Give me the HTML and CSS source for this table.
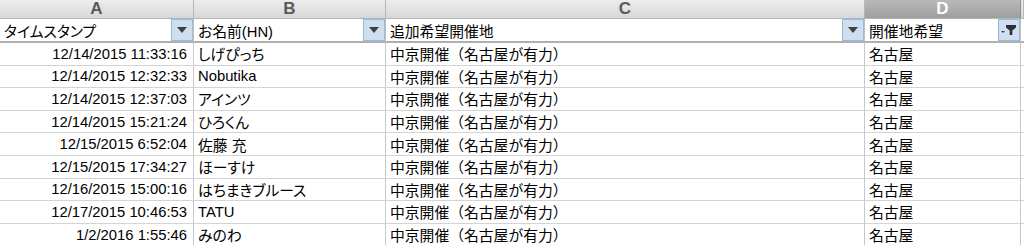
FILE: index.html
```html
<!DOCTYPE html>
<html lang="ja">
<head>
<meta charset="utf-8">
<link rel="stylesheet" href="styles.css">
</head>
<body>
<div class="sheet">
  <div class="row colhead">
    <div class="cell">A</div>
    <div class="cell">B</div>
    <div class="cell">C</div>
    <div class="cell sel">D</div>
    <div class="cell edge"></div>
  </div>
  <div class="row filter">
    <div class="cell"><span class="label kana">タイムスタンプ</span><span class="fbtn"><svg width="10" height="6" viewBox="0 0 10 6"><path d="M0 0H10L5 6Z" fill="#404040"/></svg></span></div>
    <div class="cell"><span class="label kana">お名前(HN)</span><span class="fbtn"><svg width="10" height="6" viewBox="0 0 10 6"><path d="M0 0H10L5 6Z" fill="#404040"/></svg></span></div>
    <div class="cell"><span class="label">追加希望開催地</span><span class="fbtn"><svg width="10" height="6" viewBox="0 0 10 6"><path d="M0 0H10L5 6Z" fill="#404040"/></svg></span></div>
    <div class="cell"><span class="label">開催地希望</span><span class="fbtn funnel"><svg width="16" height="12" viewBox="0 0 16 12"><path d="M0 7H4L2 9Z" fill="#404040"/><path d="M5 1H15V3.5L11.3 6.5V11H8.7V6.5L5 3.5Z" fill="#303030"/></svg></span></div>
    <div class="cell edge"></div>
  </div>
  <div class="row data"><div class="cell num">12/14/2015 11:33:16</div><div class="cell kana">しげぴっち</div><div class="cell">中京開催（名古屋が有力）</div><div class="cell">名古屋</div><div class="cell edge"></div></div>
  <div class="row data"><div class="cell num">12/14/2015 12:32:33</div><div class="cell kana">Nobutika</div><div class="cell">中京開催（名古屋が有力）</div><div class="cell">名古屋</div><div class="cell edge"></div></div>
  <div class="row data"><div class="cell num">12/14/2015 12:37:03</div><div class="cell kana">アインツ</div><div class="cell">中京開催（名古屋が有力）</div><div class="cell">名古屋</div><div class="cell edge"></div></div>
  <div class="row data"><div class="cell num">12/14/2015 15:21:24</div><div class="cell kana">ひろくん</div><div class="cell">中京開催（名古屋が有力）</div><div class="cell">名古屋</div><div class="cell edge"></div></div>
  <div class="row data"><div class="cell num">12/15/2015 6:52:04</div><div class="cell kana">佐藤 充</div><div class="cell">中京開催（名古屋が有力）</div><div class="cell">名古屋</div><div class="cell edge"></div></div>
  <div class="row data"><div class="cell num">12/15/2015 17:34:27</div><div class="cell kana">ほーすけ</div><div class="cell">中京開催（名古屋が有力）</div><div class="cell">名古屋</div><div class="cell edge"></div></div>
  <div class="row data"><div class="cell num">12/16/2015 15:00:16</div><div class="cell kana">はちまきブルース</div><div class="cell">中京開催（名古屋が有力）</div><div class="cell">名古屋</div><div class="cell edge"></div></div>
  <div class="row data"><div class="cell num">12/17/2015 10:46:53</div><div class="cell kana">TATU</div><div class="cell">中京開催（名古屋が有力）</div><div class="cell">名古屋</div><div class="cell edge"></div></div>
  <div class="row data"><div class="cell num">1/2/2016 1:55:46</div><div class="cell kana">みのわ</div><div class="cell">中京開催（名古屋が有力）</div><div class="cell">名古屋</div><div class="cell edge"></div></div>
</div>
</body>
</html>
```
FILE: styles.css
```css
html, body {
  margin: 0;
  padding: 0;
  background: #ffffff;
}
body {
  width: 1024px;
  height: 245px;
  overflow: hidden;
  font-family: "Liberation Sans", "Noto Sans CJK JP", sans-serif;
  font-size: 14.8px;
  color: #000;
}
.sheet {
  display: flex;
  flex-direction: column;
}
.row {
  display: grid;
  grid-template-columns: 194px 192px 479px 156px 3px;
}
.cell {
  box-sizing: border-box;
  border-right: 1px solid #c8c8c8;
  border-bottom: 1px solid #d4d4d4;
  white-space: nowrap;
  overflow: hidden;
  display: flex;
  align-items: center;
  padding-left: 4px;
}
.kana {
  font-feature-settings: "palt" 1;
}
.cell.edge {
  border-right: none;
  padding: 0;
}
.colhead .cell {
  height: 19px;
  justify-content: center;
  padding: 0;
  background: linear-gradient(#ededed, #d8d8d8);
  border-right: 1px solid #b8b8b8;
  border-bottom: 1px solid #b4b4b4;
  font-weight: bold;
  font-size: 17px;
  color: #5a5a5a;
}
.colhead .cell.sel {
  background: linear-gradient(#b9b9b9, #9e9e9e);
  color: #ffffff;
  border-right-color: #8c8c8c;
}
.colhead .cell.edge {
  background: linear-gradient(#ededed, #d8d8d8);
}
.filter .cell {
  height: 24px;
  padding-right: 0;
  justify-content: space-between;
  border-bottom: 2px solid #b0b0b0;
  border-right-color: #c0c0c0;
}
.filter .label {
  padding-top: 1px;
}
.fbtn {
  box-sizing: border-box;
  width: 22px;
  height: 22px;
  background: #cddff0;
  border: 1px solid #9bbcd9;
  display: flex;
  align-items: flex-start;
  justify-content: center;
  padding-top: 7px;
  flex-shrink: 0;
}
.fbtn.funnel {
  padding-top: 4px;
}
.data .cell {
  height: 22.6px;
}
.data .cell.num {
  justify-content: flex-end;
  padding-right: 6px;
}
```
